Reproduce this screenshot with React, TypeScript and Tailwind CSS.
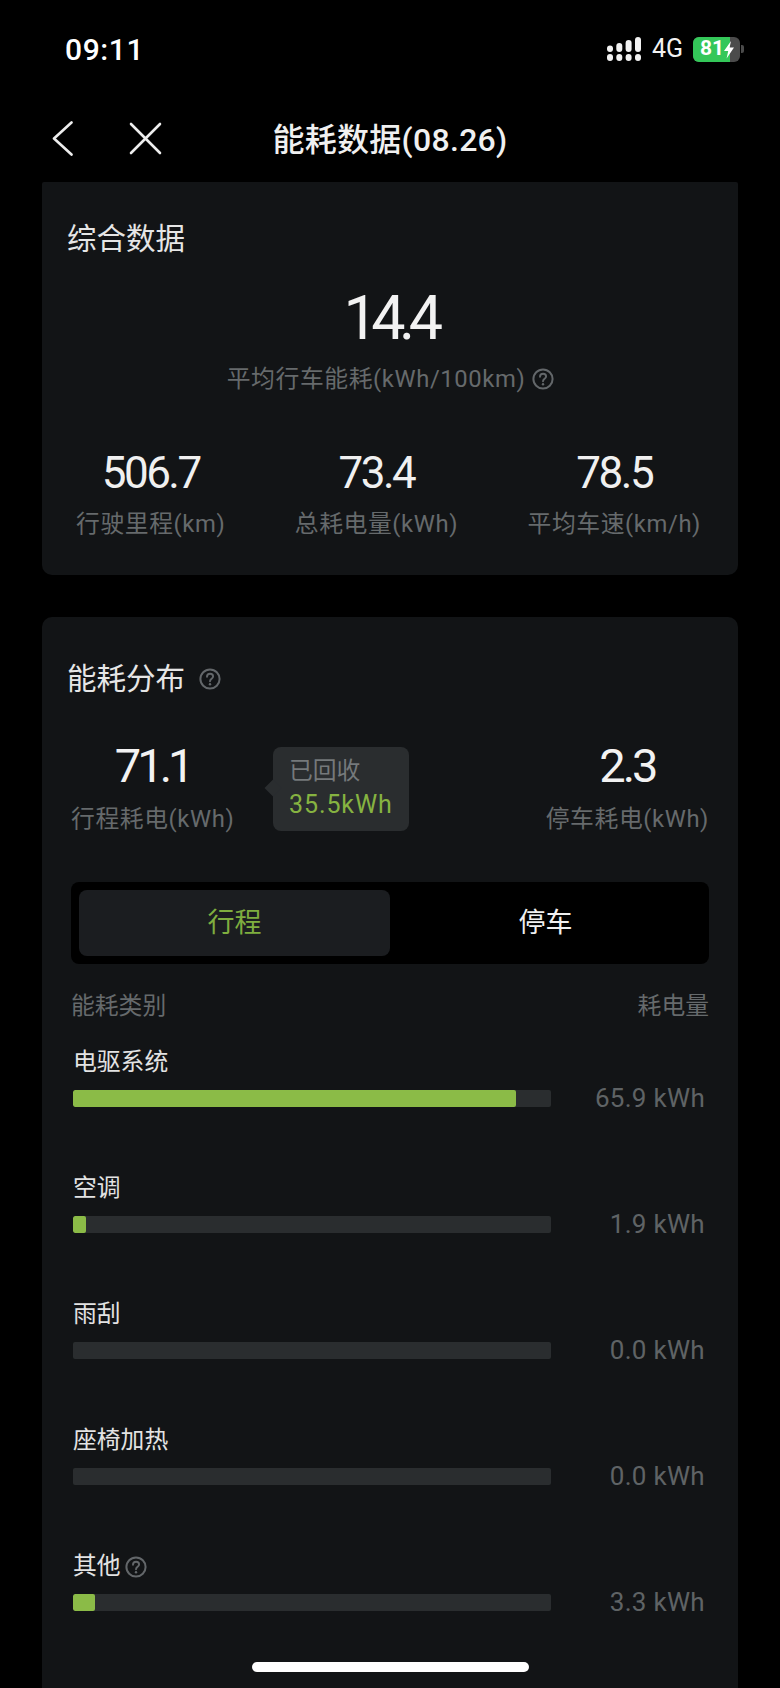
const fontStack = 'font-[Roboto,"Noto_Sans_CJK_SC",sans-serif]';

function HelpIcon({ className }: { className?: string }) {
  return (
    <svg viewBox="0 0 22 22" fill="none" className={className}>
      <circle cx="11" cy="11" r="9.6" stroke="#63676a" strokeWidth="2" />
      <path d="M8 8.8c0-1.8 1.3-3 3.1-3 1.7 0 3 1.1 3 2.6 0 2.3-3.1 2.4-3.1 4.8" stroke="#63676a" strokeWidth="1.9" strokeLinecap="round" />
      <circle cx="11" cy="16.2" r="1.2" fill="#63676a" />
    </svg>
  );
}

function SignalIcon() {
  return (
    <svg width="34" height="24" viewBox="0 0 34 24" fill="#f2f2f2">
      <rect x="0" y="17" width="6" height="7" rx="3" />
      <rect x="9.3" y="17" width="6" height="7" rx="3" />
      <rect x="18.6" y="17" width="6" height="7" rx="3" />
      <rect x="28" y="17" width="6" height="7" rx="3" />
      <rect x="0" y="8.5" width="6" height="6.5" rx="3" />
      <rect x="9.3" y="6" width="6" height="9" rx="3" />
      <rect x="18.6" y="3" width="6" height="12" rx="3" />
      <rect x="28" y="0" width="6" height="15" rx="3" />
    </svg>
  );
}

function Battery() {
  return (
    <div className="flex items-center">
      <div className="flex h-[25px] w-[47px] overflow-hidden rounded-[6px] bg-[#4b4b4b]">
        <div className="flex h-full w-[37px] shrink-0 items-center bg-[#34c759] pl-[7px] text-[21px] font-bold text-white">81</div>
        <svg width="12" height="25" viewBox="0 0 12 25" className="relative -ml-[7px] shrink-0" fill="#ffffff">
          <path d="M8 4 1 14h4.2L3.6 21.5 11 10.6H6.6z" />
        </svg>
      </div>
      <div className="ml-[1px] h-[8px] w-[3px] rounded-r-[2px] bg-[#4b4b4b]" />
    </div>
  );
}

function Stat({ value, label }: { value: string; label: string }) {
  return (
    <div className="flex flex-col items-center">
      <div className="text-[44px] leading-[44px] tracking-[-2.5px] text-[#f0f0f0]">{value}</div>
      <div className="mt-[14px] text-[23.8px] leading-[30px] tracking-[0.6px] text-[#666a6c]">{label}</div>
    </div>
  );
}

const rows = [
  { name: '电驱系统', pct: 92.7, value: '65.9 kWh' },
  { name: '空调', pct: 2.7, value: '1.9 kWh' },
  { name: '雨刮', pct: 0, value: '0.0 kWh' },
  { name: '座椅加热', pct: 0, value: '0.0 kWh' },
  { name: '其他', pct: 4.6, value: '3.3 kWh', help: true },
];

export default function App() {
  return (
    <div className={`relative h-[1688px] w-[780px] overflow-hidden bg-black ${fontStack}`}>
      {/* status bar */}
      <div className="flex h-[100px] items-center justify-between pb-[2px] pl-[65px] pr-[36px]">
        <span className="text-[30px] font-medium tracking-[0.6px] text-white">09:11</span>
        <div className="flex items-center">
          <SignalIcon />
          <span className="ml-[11px] mr-[10px] text-[25px] text-[#f2f2f2]">4G</span>
          <Battery />
        </div>
      </div>

      {/* nav */}
      <div className="relative flex h-[82px] items-center pb-[6px] pl-[52px]">
        <svg width="21" height="35" viewBox="0 0 21 35" fill="none" stroke="#ededed" strokeWidth="2.6" strokeLinecap="round" strokeLinejoin="round">
          <path d="M19.5 1.5 2 17.5l17.5 16" />
        </svg>
        <svg width="33" height="33" viewBox="0 0 33 33" fill="none" stroke="#ededed" strokeWidth="2.6" strokeLinecap="round" className="ml-[56px]">
          <path d="M2 2l29 29M31 2 2 31" />
        </svg>
        <div className="absolute inset-x-0 top-[18px] text-center text-[32px] font-medium leading-[44px] tracking-[0.3px] text-[#f0f0f0]">
          能耗数据(08.26)
        </div>
      </div>

      <div className="mx-[42px]">
        {/* 综合数据 */}
        <section className="h-[393px] rounded-b-[10px] rounded-t-[2px] bg-[#121416] pt-[37px]">
          <h2 className="pl-[25px] text-[29.5px] leading-[40px] text-[#e6e6e6]">综合数据</h2>
          <div className="mt-[29px] text-center text-[61px] leading-[60px] tracking-[-6.5px] text-[#f2f2f2]">14.4</div>
          <div className="mt-[15px] flex items-center justify-center gap-[7px] pl-[1px] text-[23.8px] leading-[32px] tracking-[0.6px] text-[#666a6c]">
            平均行车能耗(kWh/100km)
            <HelpIcon className="h-[22px] w-[22px]" />
          </div>
          <div className="mt-[56px] flex justify-between pl-[34px] pr-[37px]">
            <Stat value="506.7" label="行驶里程(km)" />
            <Stat value="73.4" label="总耗电量(kWh)" />
            <Stat value="78.5" label="平均车速(km/h)" />
          </div>
        </section>

        {/* 能耗分布 */}
        <section className="mt-[42px] h-[1100px] rounded-[10px] bg-[#121416] px-[29px] pt-[44px]">
          <div className="flex items-center">
            <h2 className="-ml-[4px] text-[29.5px] leading-[36px] text-[#e6e6e6]">能耗分布</h2>
            <HelpIcon className="ml-[14px] h-[22px] w-[22px]" />
          </div>

          <div className="relative mt-[45px] flex justify-between">
            <div className="flex flex-col items-center">
              <div className="text-[47px] leading-[48px] tracking-[-4px] text-[#f2f2f2]">71.1</div>
              <div className="mt-[14px] text-[23.8px] leading-[30px] tracking-[0.6px] text-[#666a6c]">行程耗电(kWh)</div>
            </div>
            <div className="flex flex-col items-center">
              <div className="text-[47px] leading-[48px] tracking-[-3px] text-[#f2f2f2]">2.3</div>
              <div className="mt-[14px] text-[23.8px] leading-[30px] tracking-[0.6px] text-[#666a6c]">停车耗电(kWh)</div>
            </div>
            {/* recovered tooltip */}
            <div className="absolute left-[202px] top-[5px] h-[84px] w-[136px] rounded-[8px] bg-[#2a2d2f] pl-[16px] pt-[8px]">
              <div className="absolute left-[-6px] top-[35px] h-[12px] w-[12px] rotate-45 bg-[#2a2d2f]" />
              <div className="relative text-[23.8px] leading-[32px] text-[#75797b]">已回收</div>
              <div className="relative mt-[2px] text-[25px] leading-[32px] tracking-[0.9px] text-[#86b341]">35.5kWh</div>
            </div>
          </div>

          {/* tabs */}
          <div className="mt-[48px] flex h-[82px] rounded-[8px] bg-black p-[8px]">
            <div className="flex w-[311px] items-center justify-center rounded-[8px] bg-[#1b1d20] text-[27px] text-[#7fae3f]">行程</div>
            <div className="flex flex-1 items-center justify-center text-[27px] text-[#f0f0f0]">停车</div>
          </div>

          <div className="mt-[26px] flex justify-between text-[23.8px] leading-[32px] text-[#666a6c]">
            <span>能耗类别</span>
            <span>耗电量</span>
          </div>

          <div className="mt-[25px] flex flex-col gap-[60px]">
            {rows.map((row) => (
              <div key={row.name}>
                <div className="flex h-[32px] items-center gap-[4px] pl-[2px] text-[23.8px] text-[#e3e3e3]">
                  {row.name}
                  {row.help && <HelpIcon className="h-[22px] w-[22px]" />}
                </div>
                <div className="mt-[4px] flex h-[30px] items-center">
                  <div className="ml-[2px] h-[17px] w-[478px] overflow-hidden rounded-[2px] bg-[#2a2d2f]">
                    <div className="h-full rounded-[2px] bg-[#8bbb47]" style={{ width: `${row.pct}%` }} />
                  </div>
                  <div className="flex-1 pr-[4px] text-right text-[26px] tracking-[0.3px] text-[#5f6365]">{row.value}</div>
                </div>
              </div>
            ))}
          </div>
        </section>
      </div>

      {/* home indicator */}
      <div className="absolute left-[252px] top-[1662px] h-[10px] w-[277px] rounded-full bg-white" />
    </div>
  );
}
